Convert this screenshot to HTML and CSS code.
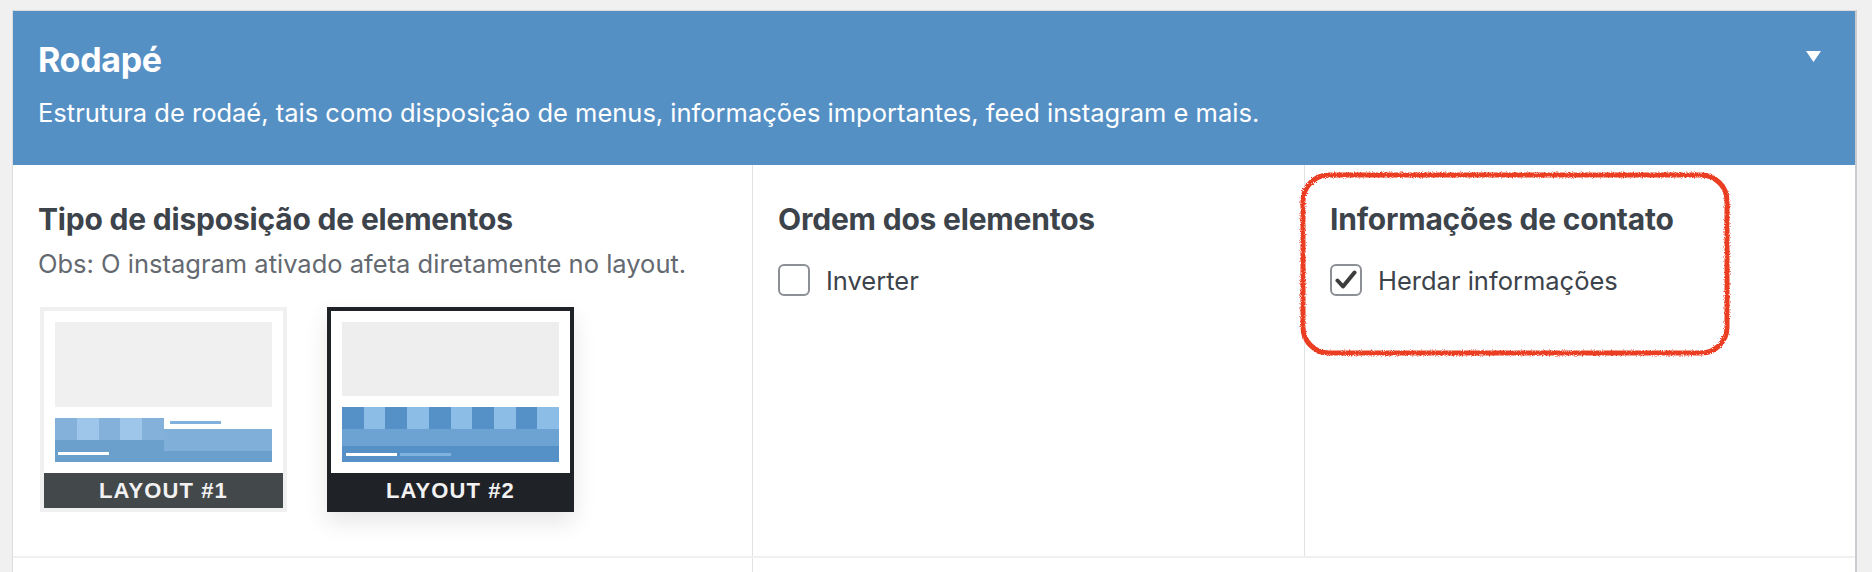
FILE: index.html
```html
<!DOCTYPE html>
<html lang="pt-BR">
<head>
<meta charset="utf-8">
<title>Rodapé</title>
<link rel="stylesheet" href="styles.css">
</head>
<body>
<div class="panel">
  <header class="panel-head">
    <div class="head-row">
      <h2 class="title">Rodapé</h2>
      <svg class="caret" width="15" height="11" viewBox="0 0 15 11"><polygon points="0,0 15,0 7.5,11" fill="#fff"/></svg>
    </div>
    <p class="desc">Estrutura de rodaé, tais como disposição de menus, informações importantes, feed instagram e mais.</p>
  </header>
  <div class="row">
    <section class="col col-a">
      <h3 class="col-title">Tipo de disposição de elementos</h3>
      <p class="note">Obs: O instagram ativado afeta diretamente no layout.</p>
      <div class="layouts">
        <div class="layout-card">
          <div class="thumb">
            <div class="thumb-top t1"></div>
            <div class="foot foot-1">
              <div class="f1-left">
                <div class="stripes">
                  <span class="s-a"></span><span class="s-b"></span><span class="s-a"></span><span class="s-b"></span><span class="s-a"></span>
                </div>
                <div class="f1-band"><span class="line line-white"></span></div>
              </div>
              <div class="f1-right">
                <div class="f1-r-top"><span class="line line-blue"></span></div>
                <div class="f1-r-mid"></div>
                <div class="f1-r-bot"></div>
              </div>
            </div>
          </div>
          <div class="label">LAYOUT #1</div>
        </div>
        <div class="layout-card is-active">
          <div class="thumb">
            <div class="thumb-top t2"></div>
            <div class="foot foot-2">
              <div class="stripes stripes-10">
                <span class="d"></span><span class="l"></span><span class="d"></span><span class="l"></span><span class="d"></span><span class="l"></span><span class="d"></span><span class="l"></span><span class="d"></span><span class="l"></span>
              </div>
              <div class="f2-mid"></div>
              <div class="f2-bot"><span class="line line-white"></span><span class="line line-light"></span></div>
            </div>
          </div>
          <div class="label">LAYOUT #2</div>
        </div>
      </div>
    </section>
    <section class="col col-b">
      <h3 class="col-title">Ordem dos elementos</h3>
      <label class="check">
        <span class="box"></span>
        <span class="check-text">Inverter</span>
      </label>
    </section>
    <section class="col col-c">
      <h3 class="col-title">Informações de contato</h3>
      <label class="check">
        <span class="box is-checked">
          <svg width="22" height="20" viewBox="0 0 22 20"><path d="M2.5 10.5 L8 16.5 L19.5 2.5" fill="none" stroke="#3d3d3d" stroke-width="4" stroke-linecap="round" stroke-linejoin="round"/></svg>
        </span>
        <span class="check-text">Herdar informações</span>
      </label>
      <svg class="annot" width="434" height="188" viewBox="0 0 434 188">
        <defs>
          <filter id="rough" x="-5%" y="-5%" width="110%" height="110%">
            <feTurbulence type="fractalNoise" baseFrequency="0.9" numOctaves="2" seed="3" result="n"/>
            <feDisplacementMap in="SourceGraphic" in2="n" scale="3.5"/>
          </filter>
        </defs>
        <rect x="5" y="5" width="424" height="178" rx="26" ry="26" fill="none" stroke="#ea3c24" stroke-width="5" filter="url(#rough)"/>
      </svg>
    </section>
  </div>
  <div class="row row-next">
    <div class="col col-a"></div>
    <div class="col col-wide"></div>
  </div>
</div>
</body>
</html>
```

FILE: styles.css
```css
* { box-sizing: border-box; }

html, body {
  margin: 0;
  height: 572px;
  overflow: hidden;
}

body {
  background: #f0f0f1;
  font-family: Inter, "Noto Sans", sans-serif;
  color: #3c434a;
}

.panel {
  margin: 10px 0 0 12px;
  width: 1845px;
  background: #fff;
  border-top: 1px solid #dcdcde;
  border-left: 1px solid #dcdcde;
  border-right: 2px solid #c8cbcf;
}

.panel-head {
  height: 154px;
  background: #5590c5;
  padding: 29px 34px 0 25px;
  color: #fff;
}

.head-row {
  display: flex;
  justify-content: space-between;
  align-items: flex-start;
}

.title {
  margin: 0;
  font-size: 34px;
  line-height: 40px;
  font-weight: 700;
  letter-spacing: -0.3px;
}

.caret {
  margin-top: 11px;
  display: block;
}

.desc {
  margin: 18px 0 0;
  font-size: 25.5px;
  line-height: 30px;
  font-weight: 400;
}

.row {
  display: grid;
  grid-template-columns: 739px 552px 1fr;
  height: 393px;
  border-bottom: 2px solid #f0f0f1;
}

.col {
  position: relative;
  padding: 36px 25px 0 25px;
}

.col + .col {
  border-left: 1px solid #e2e2e2;
}

.col-title {
  margin: 0;
  font-size: 30px;
  line-height: 36px;
  font-weight: 700;
  color: #3c434a;
  letter-spacing: -0.2px;
}

.note {
  margin: 11px 0 0;
  font-size: 25.5px;
  line-height: 32px;
  color: #646970;
}

.layouts {
  display: flex;
  gap: 40px;
  margin-top: 27px;
  padding-left: 2px;
}

.layout-card {
  width: 247px;
  border: 4px solid #f0f0f1;
  background: #fff;
}

.layout-card.is-active {
  border-color: #1f2327;
  box-shadow: 0 10px 22px rgba(0, 0, 0, 0.10);
}

.thumb {
  height: 162px;
  padding: 11px;
  display: flex;
  flex-direction: column;
  gap: 11px;
}

.thumb-top {
  background: #f0f0f0;
}

.thumb-top.t1 { height: 85px; }
.thumb-top.t2 { height: 74px; background: #eeeeee; }

.foot {
  flex: 1;
  display: flex;
}

.foot-1 { flex-direction: row; }
.foot-2 { flex-direction: column; }

.f1-left {
  width: 109px;
  display: flex;
  flex-direction: column;
}

.stripes {
  height: 22px;
  display: flex;
}

.stripes span { flex: 1; }
.s-a { background: #84b1d9; }
.s-b { background: #9dc6ea; }

.f1-band {
  flex: 1;
  background: #6b9fcc;
  padding: 12px 0 0 3px;
}

.line {
  display: block;
  height: 3px;
  width: 51px;
}

.line-white { background: #fff; }
.line-blue { background: #80b1dc; }
.line-light { background: #7fb2de; }

.f1-right {
  flex: 1;
  display: flex;
  flex-direction: column;
}

.f1-r-top {
  height: 11px;
  background: #fff;
  padding: 3px 0 0 6px;
}

.f1-r-mid {
  height: 22px;
  background: #80b0d9;
}

.f1-r-bot {
  flex: 1;
  background: #6b9fcc;
}

.stripes-10 .d { background: #5590c6; }
.stripes-10 .l { background: #8bbde6; }

.f2-mid {
  height: 17px;
  background: #6ca3d2;
}

.f2-bot {
  flex: 1;
  background: #5590c6;
  display: flex;
  gap: 3px;
  padding: 7px 0 0 4px;
}

.label {
  height: 35px;
  background: #43484b;
  color: #f2f2f2;
  font-family: "Liberation Sans", Arial, sans-serif;
  font-weight: 700;
  font-size: 22px;
  letter-spacing: 1.1px;
  line-height: 35px;
  text-align: center;
}

.is-active .label {
  background: #1f2327;
}

.check {
  display: flex;
  align-items: center;
  gap: 16px;
  margin-top: 27px;
  height: 32px;
}

.box {
  width: 32px;
  height: 32px;
  border: 2px solid #8c8f94;
  border-radius: 6px;
  background: #fff;
  display: flex;
  align-items: center;
  justify-content: center;
  flex: none;
}

.box svg { display: block; }

.check-text {
  font-size: 25.5px;
  line-height: 32px;
  color: #3c434a;
  padding-top: 2px;
}

.annot {
  position: absolute;
  left: -7px;
  top: 5px;
  pointer-events: none;
}

.row-next {
  grid-template-columns: 739px 1fr;
  height: 40px;
  border-bottom: none;
}
```
